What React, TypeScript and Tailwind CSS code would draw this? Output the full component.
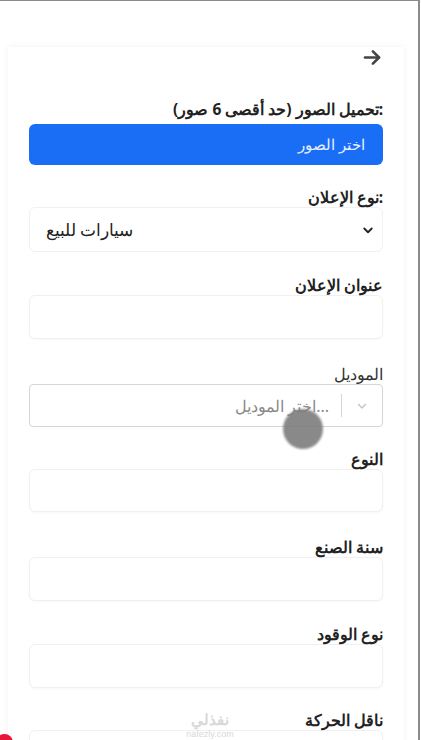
import React from "react";

const font = { fontFamily: '"Noto Sans", "Liberation Sans", sans-serif' };

function Label({ children, light }: { children: React.ReactNode; light?: boolean }) {
  return (
    <div
      dir="ltr"
      className={`h-[20px] text-right leading-[20px] ${light ? "text-[16px] text-[#333]" : "text-[15.5px] font-bold text-[#222]"}`}
    >
      {children}
    </div>
  );
}

function Field({ label, mt, h }: { label: string; mt: string; h: string }) {
  return (
    <div className={mt}>
      <Label>{label}</Label>
      <div className={`${h} w-full rounded-md border border-[#f0f0f0] bg-white shadow-[0_1px_2px_rgba(0,0,0,0.03)]`}></div>
    </div>
  );
}

export default function App() {
  return (
    <div className="relative h-[740px] w-[420px] overflow-hidden border-t border-r-2 border-[#8a8a8a] bg-white" style={font} dir="rtl">
      <div className="ml-[8px] mr-[14px] mt-[46px] h-[800px] bg-white px-[21px] shadow-[0_0_6px_rgba(0,0,0,0.06)]">
        <div className="flex h-[20px] justify-start">
          <svg width="22" height="21" viewBox="0 0 24 24" fill="none" stroke="#444" strokeWidth="3" strokeLinecap="round" strokeLinejoin="round">
            <path d="M4 12h16" />
            <path d="M13 5l7 7-7 7" />
          </svg>
        </div>
        <div className="mt-[32px]">
          <Label>تحميل الصور (حد أقصى 6 صور):</Label>
        </div>
        <div className="mt-[5px] flex h-[41px] items-center rounded-md bg-[#1a6ef6] pr-[18px] text-[15px] text-[#e9f0ff]">اختر الصور</div>
        <div className="mt-[22px]">
          <Label>نوع الإعلان:</Label>
        </div>
        <div className="flex h-[45px] items-center justify-between rounded-md border border-[#f1f1f1] bg-white pl-[16px] pr-[8px] text-[17px] text-[#222]" dir="ltr">
          <span dir="rtl">سيارات للبيع</span>
          <svg width="12" height="12" viewBox="0 0 16 16" fill="none" stroke="#222" strokeWidth="2.4" strokeLinecap="round" strokeLinejoin="round">
            <path d="M3 6l5 5 5-5" />
          </svg>
        </div>
        <Field label="عنوان الإعلان" mt="mt-[23px]" h="h-[44px]" />
        <div className="mt-[25px]">
          <Label light>الموديل</Label>
          <div className="flex h-[43px] items-center rounded-[4px] border border-[#d6d6d6] bg-white">
            <div className="flex h-full w-[40px] items-center justify-center">
              <svg width="14" height="14" viewBox="0 0 20 20" fill="#c2c2c2">
                <path d="M4.5 7.2a1 1 0 0 1 1.4 0L10 11.3l4.1-4.1a1 1 0 1 1 1.4 1.4l-4.8 4.8a1 1 0 0 1-1.4 0L4.5 8.6a1 1 0 0 1 0-1.4z" />
              </svg>
            </div>
            <div className="h-[23px] w-px bg-[#d6d6d6]"></div>
            <div className="pr-[12px] text-[16px] text-[#8a8a8a]">...اختر الموديل</div>
          </div>
        </div>
        <Field label="النوع" mt="mt-[22px]" h="h-[43px]" />
        <Field label="سنة الصنع" mt="mt-[25px]" h="h-[44px]" />
        <Field label="نوع الوقود" mt="mt-[23px]" h="h-[44px]" />
        <Field label="ناقل الحركة" mt="mt-[22px]" h="h-[44px]" />
      </div>
      <div className="absolute left-[283px] top-[408px] h-[40px] w-[40px] rounded-full bg-[#7d7d7d] opacity-90 blur-[1px]"></div>
      <div className="absolute left-[180px] top-[708px] flex w-[60px] flex-col items-center text-[#d8d8d8]">
        <span className="h-[20px] text-[15px] font-bold leading-[20px]">نفذلي</span>
        <span className="h-[10px] text-[9px] leading-[10px]" style={{ fontFamily: '"Liberation Sans", sans-serif' }}>nafezly.com</span>
      </div>
      <div className="absolute left-[-4px] top-[733px] h-[17px] w-[17px] rounded-full bg-[#e8173a]"></div>
    </div>
  );
}
